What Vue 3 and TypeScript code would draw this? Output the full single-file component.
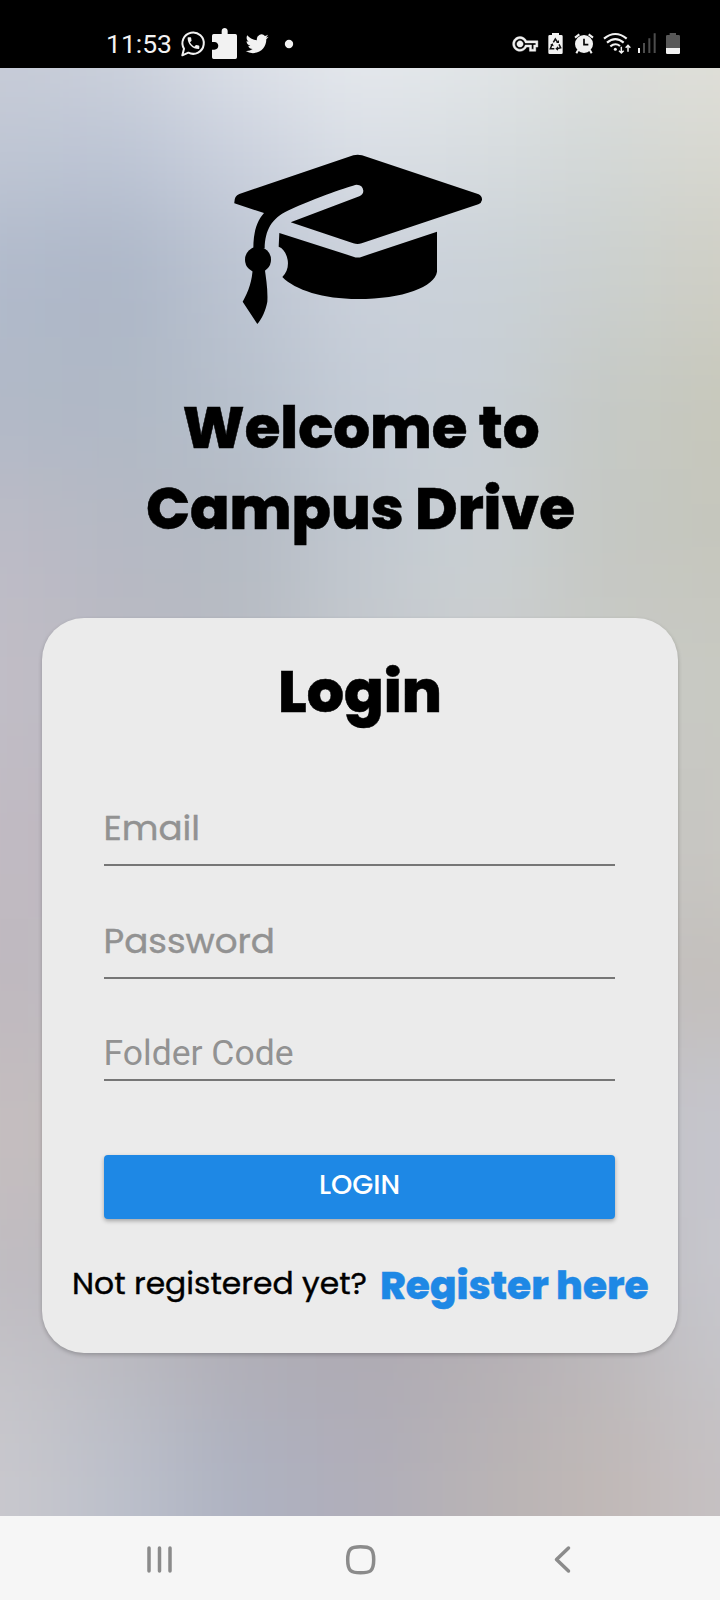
<script setup lang="ts">
interface Row {
  y: number
  h: number
  colors: string[]
}

const columnX = [-150, 60, 180, 300, 420, 540, 660]
const columnW = [210, 120, 120, 120, 120, 120, 210]

const rows: Row[] = [
  { y: -150, h: 180, colors: ['#c8ccd8', '#cdd2dc', '#dee2e9', '#e7eaee', '#e3e7e9', '#dddfdd', '#e1e0da'] },
  { y: 30, h: 110, colors: ['#bfc6d4', '#bdc5d5', '#cbd1de', '#dadfe6', '#d8dde0', '#d3d8d7', '#d8d8d0'] },
  { y: 140, h: 130, colors: ['#b1bacb', '#acb6c7', '#bcc4d2', '#cbd1db', '#cad1d8', '#cbd0cf', '#cfcfc5'] },
  { y: 270, h: 130, colors: ['#b1b9c7', '#afb8c5', '#b7c0cc', '#c4ccd7', '#c8cfd6', '#c5c9c6', '#c7c8bb'] },
  { y: 400, h: 130, colors: ['#bcbbc6', '#b5b9c4', '#b4bbc4', '#c1c8d0', '#cad0d4', '#c5c8c4', '#c5c6bc'] },
  { y: 530, h: 170, colors: ['#c1bdc6', '#bab9c2', '#b8bbc2', '#c4c8cd', '#cbcecf', '#c8c9c5', '#c8c9c2'] },
  { y: 700, h: 150, colors: ['#c1bac2', '#bcb8c0', '#bdbabf', '#c2c1c4', '#c6c6c6', '#c5c3c1', '#c8c7c2'] },
  { y: 850, h: 130, colors: ['#bfb9bf', '#bfbbc1', '#bdb9be', '#bdbabd', '#c1bebf', '#c3bfbe', '#c3bfbc'] },
  { y: 980, h: 170, colors: ['#c5bebf', '#beb9bd', '#b9b5bb', '#b7b3b9', '#bbb8bd', '#c1bfc4', '#c6c6cd'] },
  { y: 1150, h: 110, colors: ['#c0bcc2', '#bab8bd', '#b1aeb5', '#afaab1', '#b4afb4', '#bbb8bd', '#c8c8ce'] },
  { y: 1260, h: 90, colors: ['#c5c4c9', '#bbbbc2', '#b0afb8', '#aeabb4', '#b4afb4', '#bcb8ba', '#c5c4c8'] },
  { y: 1350, h: 220, colors: ['#c9c8cd', '#bcc0cb', '#aeb2c1', '#b0aeba', '#b8b3b5', '#c0b8b6', '#c6c1c3'] },
]
</script>

<template>
  <div class="screen">
    <header class="status">
      <span class="clock">11:53</span>
      <svg class="left-icons" viewBox="270 48 345 105" width="115" height="35" fill="#f2f2f2">
        <path d="M277 136 L282 116 A32 32 0 1 1 295 128 Z" fill="none" stroke="#f2f2f2" stroke-width="6" stroke-linejoin="round" />
        <path transform="translate(287 76) scale(1.95)" d="M6.62 10.79c1.44 2.83 3.76 5.14 6.59 6.59l2.2-2.2c.27-.27.67-.36 1.02-.24 1.12.37 2.33.57 3.57.57.55 0 1 .45 1 1V20c0 .55-.45 1-1 1-9.39 0-17-7.61-17-17 0-.55.45-1 1-1h3.5c.55 0 1 .45 1 1 0 1.25.2 2.45.57 3.57.11.35.03.74-.25 1.02l-2.2 2.2z" />
        <path d="M371 72 H395 V63 C395 51 413 51 413 63 V72 H436 Q441 72 441 77 V142 Q441 147 436 147 H371 Q366 147 366 142 V119 H373 C389 119 389 96 373 96 H366 V77 Q366 72 371 72Z" />
        <path transform="translate(467 67) scale(2.87)" d="M23.953 4.57a10 10 0 01-2.825.775 4.958 4.958 0 002.163-2.723c-.951.555-2.005.959-3.127 1.184a4.92 4.92 0 00-8.384 4.482C7.69 8.095 4.067 6.13 1.64 3.162a4.822 4.822 0 00-.666 2.475c0 1.71.87 3.213 2.188 4.096a4.904 4.904 0 01-2.228-.616v.06a4.923 4.923 0 003.946 4.827 4.996 4.996 0 01-2.212.085 4.936 4.936 0 004.604 3.417 9.867 9.867 0 01-6.102 2.105c-.39 0-.779-.023-1.17-.067a13.995 13.995 0 007.557 2.209c9.053 0 13.998-7.496 13.998-13.985 0-.21 0-.42-.015-.63A9.935 9.935 0 0024 4.59z" />
        <circle cx="597" cy="102" r="12.5" />
      </svg>
      <svg class="right-icons" viewBox="30 48 525 105" width="175" height="35" fill="#f2f2f2">
        <path transform="translate(38 64) scale(3.15)" stroke="#f2f2f2" stroke-width=".4" d="M22 19h-6v-4h-2.68c-1.14 2.42-3.6 4-6.32 4-3.86 0-7-3.14-7-7s3.14-7 7-7c2.72 0 5.17 1.58 6.32 4H24v6h-2v4zm-4-2h2v-4h2v-2H11.94l-.23-.67C11.01 8.34 9.11 7 7 7c-2.76 0-5 2.24-5 5s2.24 5 5 5c2.11 0 4.01-1.34 4.71-3.33l.23-.67H18v4zM7 15c-1.65 0-3-1.35-3-3s1.35-3 3-3 3 1.35 3 3-1.35 3-3 3z" />
        <path d="M156 69H177V75H184Q188 75 188 79V128Q188 132 184 132H149Q145 132 145 128V79Q145 75 149 75H156Z" />
        <g fill="none" stroke="#111" stroke-width="4.5">
          <path d="M160 97 L166 87 L173 97" />
          <path d="M177 103 L182 113 L171 116" />
          <path d="M163 116 H151 L156 104" />
        </g>
        <path d="M168 99 l9 0 l0 -9z M174 109 l-8 7 l8 6z M150 105 l8 -5 l3 9z" fill="#111" />
        <circle cx="252" cy="102" r="27" />
        <path d="M225 83 L238 73 M266 73 L279 83 M234 121 L229 130 M270 121 L275 130" fill="none" stroke="#f2f2f2" stroke-width="6" />
        <path d="M252 86V104H265" fill="none" stroke="#050505" stroke-width="5" />
        <g fill="none" stroke="#f2f2f2" stroke-width="6.5">
          <path d="M312 86 Q346 58 380 86" />
          <path d="M321 98 Q346 77 371 98" />
          <path d="M331 109 Q346 97 360 108" />
        </g>
        <circle cx="346" cy="118" r="4.5" />
        <path d="M364 110V129M357 122L364 129L371 122M384 125V106M377 113L384 106L391 113" fill="none" stroke="#f2f2f2" stroke-width="4.5" />
        <rect x="414" y="114" width="6" height="15" />
        <path d="M429 99h6v30h-6zM445 85h6v44h-6zM461 70h6v59h-6z" fill="#4d4d4d" />
        <path d="M509 69H528V75H536Q540 75 540 79V114H498V79Q498 75 502 75H509Z" fill="#585858" />
        <path d="M498 114H540V128Q540 132 536 132H502Q498 132 498 128Z" />
      </svg>
    </header>

    <main class="content">
      <svg class="backdrop" viewBox="0 0 720 1448" preserveAspectRatio="none" aria-hidden="true">
        <defs>
          <filter id="soften" filterUnits="userSpaceOnUse" x="-150" y="-150" width="1020" height="1748" color-interpolation-filters="sRGB">
            <feGaussianBlur stdDeviation="48" />
          </filter>
        </defs>
        <g filter="url(#soften)">
          <template v-for="row in rows" :key="row.y">
            <rect
              v-for="(color, i) in row.colors"
              :key="i"
              :x="columnX[i]"
              :y="row.y"
              :width="columnW[i] + 1"
              :height="row.h + 1"
              :fill="color"
            />
          </template>
        </g>
      </svg>

      <svg class="cap" viewBox="0 0 840 600" width="280" height="200">
        <path d="M400 46 Q413 42 426 46 L776 163 Q787 169 786 180 Q784 190 775 193 L425 310 Q413 314 400 310 L212 247 L418 169 Q430 163 430 152 Q428 134 410 134 C390 138 290 172 203 212 C155 235 135 270 134 325 L100 325 C100 280 109 244 132 219 L43 190 Q42 168 58 162 Z" />
        <circle cx="114" cy="359" r="39" />
        <path d="M98 385 L134 385 C138 415 144 450 142 485 C137 512 126 536 112 552 L68 485 C86 455 97 420 98 385Z" />
        <path d="M178 279 L400 350 Q413 355 426 350 L651 275 V395 C645 440 550 477 413 477 C310 477 225 450 187 411 C201 397 206 380 203 360 C199 340 190 325 176 320 Z" />
      </svg>

      <h1 class="welcome">
        <svg width="460" height="81" viewBox="0 0 460 81">
          <text class="heavy" x="52.5" y="58.5" textLength="357" lengthAdjust="spacingAndGlyphs">Welcome to</text>
        </svg>
        <svg width="460" height="81" viewBox="0 0 460 81">
          <text class="heavy" x="16" y="58.5" textLength="429" lengthAdjust="spacingAndGlyphs">Campus Drive</text>
        </svg>
      </h1>

      <section class="card">
        <svg class="login-title" width="200" height="100" viewBox="0 0 200 100">
          <text class="heavy" x="18" y="69" textLength="164" lengthAdjust="spacingAndGlyphs">Login</text>
        </svg>

        <div class="field email">
          <svg width="200" height="50" viewBox="0 0 200 50">
            <text class="hint" x="-.5" y="38" textLength="96.5" lengthAdjust="spacingAndGlyphs">Email</text>
          </svg>
        </div>
        <div class="field password">
          <svg width="200" height="50" viewBox="0 0 200 50">
            <text class="hint" x="-.5" y="38" textLength="171.5" lengthAdjust="spacingAndGlyphs">Password</text>
          </svg>
        </div>
        <div class="field folder">
          <svg width="200" height="50" viewBox="0 0 200 50">
            <text class="hint roboto" x="-.5" y="38" textLength="190" lengthAdjust="spacingAndGlyphs">Folder Code</text>
          </svg>
        </div>

        <button class="submit" type="button">
          <svg width="90" height="40" viewBox="0 0 90 40">
            <text class="submit-text" x="4" y="29" textLength="81" lengthAdjust="spacingAndGlyphs">LOGIN</text>
          </svg>
        </button>

        <div class="register">
          <svg width="300" height="60" viewBox="0 0 300 60">
            <text class="question" x="0" y="39" textLength="295" lengthAdjust="spacingAndGlyphs">Not registered yet?</text>
          </svg>
          <svg width="280" height="60" viewBox="0 0 280 60">
            <text class="link" x="5" y="44" textLength="268.5" lengthAdjust="spacingAndGlyphs">Register here</text>
          </svg>
        </div>
      </section>
    </main>

    <nav class="nav">
      <svg width="40" height="40" viewBox="0 0 40 40">
        <path d="M9 8V31M19.5 8V31M30 8V31" />
      </svg>
      <svg width="40" height="40" viewBox="0 0 40 40">
        <path d="M19.5 6.8C29 6.8 32.7 8 32.7 19.8S29 32.8 19.5 32.8 6.7 31 6.7 19.8 10 6.8 19.5 6.8Z" />
      </svg>
      <svg width="40" height="40" viewBox="0 0 40 40">
        <path d="M27.5 8L15.5 19.6L27.5 31" />
      </svg>
    </nav>
  </div>
</template>

<style>
body {
  margin: 0;
}
</style>

<style scoped>
.screen {
  display: flex;
  flex-direction: column;
  width: 720px;
  height: 1600px;
  overflow: hidden;
  font-family: Poppins, Inter, sans-serif;
}

svg {
  display: block;
  flex: none;
  overflow: visible;
}

.status {
  display: flex;
  flex: none;
  height: 68px;
  box-sizing: border-box;
  padding: 26px 35px 0 106px;
  background: #000;
}

.clock {
  width: 74px;
  font: 400 26.5px/36px Roboto, sans-serif;
  color: #f2f2f2;
}

.right-icons {
  margin-left: auto;
}

.content {
  position: relative;
  display: flex;
  flex: none;
  flex-direction: column;
  align-items: center;
  height: 1448px;
  background: #c2c4ca;
}

.backdrop {
  position: absolute;
  inset: 0;
  width: 720px;
  height: 1448px;
  overflow: hidden;
}

.cap {
  position: relative;
  margin-top: 72px;
}

.welcome {
  position: relative;
  margin: 49px 0 0;
  font-size: inherit;
}

.heavy {
  font-size: 58px;
  font-weight: 800;
  stroke: #000;
  stroke-width: 0.5px;
}

.card {
  position: relative;
  display: flex;
  flex-direction: column;
  align-items: center;
  width: 636px;
  height: 735px;
  box-sizing: border-box;
  margin-top: 67px;
  padding-top: 25px;
  border-radius: 42px;
  background: #ebebeb;
  box-shadow: 0 2px 4px rgba(0, 0, 0, 0.22);
}

.field {
  display: flex;
  align-items: flex-start;
  width: 511px;
  box-sizing: border-box;
  margin-right: 1px;
  border-bottom: 2px solid #767676;
}

.field.email {
  height: 64px;
  margin-top: 59px;
}

.field.password {
  height: 64px;
  margin-top: 49px;
}

.field.folder {
  height: 54px;
  margin-top: 48px;
}

.hint {
  font-size: 34.5px;
  fill: #929292;
  stroke: #929292;
  stroke-width: 0.4px;
}

.hint.roboto {
  font-family: Roboto, sans-serif;
  font-size: 35px;
  stroke: none;
}

.submit {
  display: flex;
  justify-content: center;
  width: 511px;
  height: 64px;
  margin: 74px 1px 0 0;
  padding: 10px 0 0;
  border: 0;
  border-radius: 4px;
  background: #1e88e5;
  box-shadow: 0 2px 4px rgba(0, 0, 0, 0.3);
}

.submit-text {
  font-family: Poppins, Inter, sans-serif;
  font-size: 27px;
  font-weight: 500;
  fill: #fff;
}

.register {
  display: flex;
  gap: 3px;
  width: 576px;
  margin-top: 36px;
}

.question {
  font-size: 31px;
  fill: #000;
  stroke: #000;
  stroke-width: 0.4px;
}

.link {
  font-size: 38.5px;
  font-weight: 800;
  fill: #1e88e5;
  stroke: #1e88e5;
  stroke-width: 0.4px;
}

.nav {
  display: flex;
  flex: none;
  justify-content: space-between;
  align-items: flex-start;
  height: 84px;
  box-sizing: border-box;
  padding: 24px 139px 0 140px;
  background: #f6f6f6;
}

.nav path {
  fill: none;
  stroke: #8b8b8b;
  stroke-width: 3.5;
  stroke-linecap: round;
  stroke-linejoin: round;
}
</style>
